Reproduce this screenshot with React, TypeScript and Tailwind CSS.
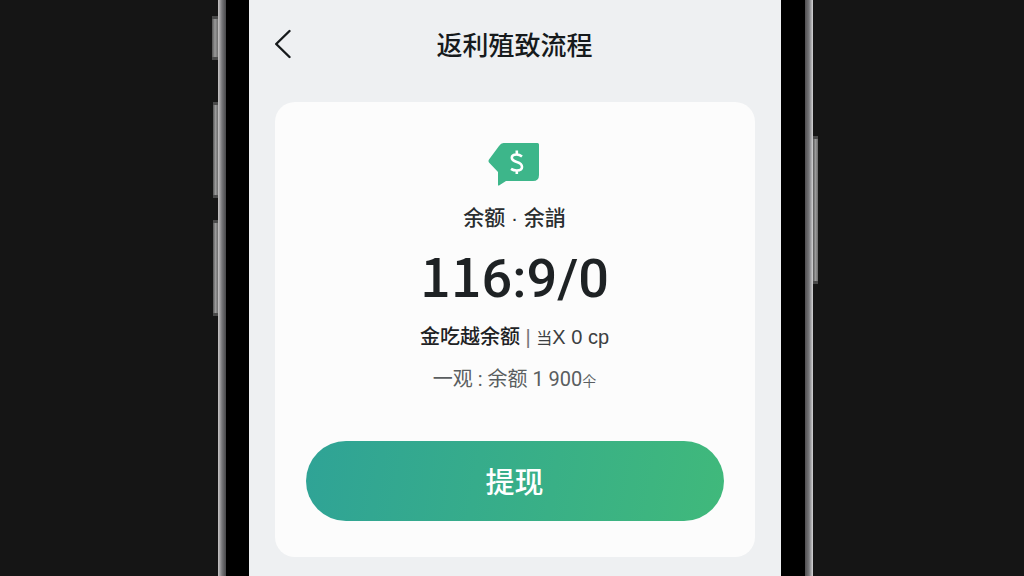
import React from "react";

interface SideKeyProps {
  className: string;
}

// Physical key on the phone frame
const SideKey: React.FC<SideKeyProps> = ({ className }) => (
  <div
    className={`border-y-3 border-[#4a4a4a] bg-gradient-to-r from-[#555555] via-[#9a9a9a] to-[#6b6b6b] ${className}`}
  ></div>
);

const BackIcon: React.FC = () => (
  <svg width="18" height="30" viewBox="0 0 18 30" fill="none" aria-hidden="true">
    <path
      d="M14.500 2 L1.200 15 L14.500 28"
      stroke="#161a1c"
      strokeWidth="2.4"
      strokeLinecap="round"
      strokeLinejoin="round"
    />
  </svg>
);

const MoneyTagIcon: React.FC = () => (
  <svg width="54" height="44" viewBox="0 0 54 44" fill="none" aria-hidden="true">
    <path
      d="M15.500 1 H49.500 Q51 1 51 2.500 V33 Q51 39 45 39 H18 L11 43.500 Q10 44 10 42.500 V30 L1 20.500 Q0 19 1 17.500 L11 4 Q13 1.200 15.500 1 Z"
      fill="#3db68a"
    />
    <path
      d="M34 14.500 Q31.500 12.500 28.500 12.500 Q23.800 12.500 23.800 15.800 Q23.800 18.500 28.800 20 Q34 21.500 34 25 Q34 28.500 28.800 28.500 Q25.500 28.500 23 26.800 M28.800 8.500 V12.500 M28.800 28.500 V32"
      stroke="#ffffff"
      strokeWidth="2.6"
    />
  </svg>
);

const App: React.FC = () => {
  return (
    <div className="flex min-h-screen bg-[#151515] pl-[6px] font-['Liberation_Sans','Noto_Sans_CJK_SC',sans-serif]">
      <div className="flex flex-1 flex-col items-end">
        <SideKey className="mt-4 h-11 w-[6px]" />
        <SideKey className="mt-[42px] h-24 w-[5px]" />
        <SideKey className="mt-[22px] h-24 w-[5px]" />
      </div>

      {/* Phone */}
      <div className="flex w-full max-w-[595px]">
        <div className="w-2 bg-gradient-to-r from-[#c8c6c6] via-[#77777a] to-[#48484a]"></div>
        <div className="flex flex-1 bg-black pr-6 pl-[23px]">
          <main className="flex-1 bg-[#eef0f2] px-[26px] pb-5">
            <header className="grid h-[102px] grid-cols-[18px_1fr_18px] items-start pt-[26px]">
              <button type="button" aria-label="返回" className="mt-[3px]">
                <BackIcon />
              </button>
              <h1 className="text-center text-[26px] leading-10 font-medium text-[#161a1c]">
                返利殖致流程
              </h1>
            </header>

            <section className="flex flex-col items-center rounded-[20px] bg-[#fcfcfc] px-[31px] pt-10 pb-9">
              <MoneyTagIcon />
              <p className="mt-[18px] text-[21px] leading-7 font-medium text-[#2a2e30]">
                余额 · 余誚
              </p>
              <p className="mt-[6px] font-['Roboto',sans-serif] text-[54px] leading-[72px] font-medium text-[#1e2224]">
                <span className="font-['Noto_Sans_CJK_SC',sans-serif]">11</span>
                6:9/0
              </p>
              <p className="mt-[6px] text-[20px] leading-8 text-[#3c4042]">
                <span className="font-medium text-[#1e2224]">金吃越余额</span>{" "}
                <span className="text-[#777777]">|</span>{" "}
                <span className="text-base">当</span>X 0 cp
              </p>
              <p className="mt-[10px] font-['Roboto','Noto_Sans_CJK_SC',sans-serif] text-[20px] leading-8 text-[#5a5e60]">
                一观 : 余额 1 900
                <span className="text-sm">仐</span>
              </p>
              <button
                type="button"
                className="mt-[46px] h-20 w-full rounded-full bg-linear-[100deg] from-[#2fa396] to-[#40b97b] font-['Noto_Sans_CJK_SC',sans-serif] text-[29px] font-medium text-white"
              >
                提现
              </button>
            </section>
          </main>
        </div>
        <div className="w-2 bg-gradient-to-r from-[#504e50] via-[#77777a] to-[#d6d6d8]"></div>
      </div>

      <div className="flex-1">
        <SideKey className="mt-34 h-37 w-[5px]" />
      </div>
    </div>
  );
};

export default App;
